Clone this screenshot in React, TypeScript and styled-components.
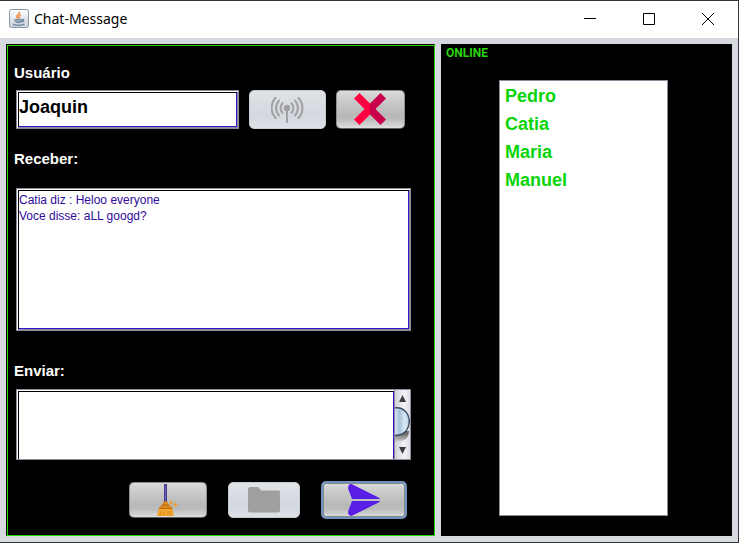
import React, { useState } from 'react';
import styled, { createGlobalStyle } from 'styled-components';

const GREEN = '#2bd40c';
const STEEL = '#8d8b9c';
const VIOLET = '#3a10c8';

const GlobalStyle = createGlobalStyle`
  * { box-sizing: border-box; }
  body { margin: 0; background: #333; font-family: "Liberation Sans", Arial, sans-serif; }
  button, input, textarea { font-family: inherit; }
`;

const Window = styled.div`
  display: flex;
  flex-direction: column;
  min-height: 100vh;
  background: #d6d9df;
  border: solid #36363a;
  border-width: 1px 1px 1px 0;
`;

const TitleBar = styled.header`
  display: flex;
  align-items: center;
  height: 37px;
  padding: 0 1px 2px 9px;
  background: #fff;
`;

const Title = styled.h1`
  flex: 1;
  margin: 0 0 0 5px;
  font: 400 14px/20px "Noto Sans", "Open Sans", sans-serif;
  color: #000;
`;

const WindowControls = styled.div`
  display: flex;
  height: 100%;
`;

const WindowButton = styled.button`
  display: flex;
  align-items: center;
  justify-content: center;
  width: 59px;
  padding: 0;
  border: 0;
  background: transparent;
`;

const Content = styled.main`
  flex: 1;
  display: grid;
  grid-template-columns: 429fr 291fr;
  gap: 6px;
  padding: 6px;
`;

const ChatPanel = styled.section`
  display: flex;
  min-width: 0;
  background: #000;
  border: 1px solid #000;
  border-right-color: ${GREEN};
  border-bottom-color: ${GREEN};
`;

const ChatBody = styled.form`
  flex: 1;
  min-width: 0;
  display: flex;
  flex-direction: column;
  padding: 17px 23px 16px 8px;
  border-left: 1px solid ${GREEN};
  border-top: 1px solid ${GREEN};
`;

const Label = styled.label<{ $above?: number; $below: number }>`
  margin: ${p => p.$above ?? 0}px 0 ${p => p.$below}px -2px;
  font-size: 15px;
  font-weight: 700;
  line-height: 20px;
  color: #fff;
`;

const bevel = `
  border: 1px solid ${STEEL};
  border-radius: 0;
  background: #fff;
  outline: none;
  resize: none;
  box-shadow: inset 1px 1px 0 #fff, inset -1px -1px 0 ${STEEL},
    inset 2px 2px 0 #000, inset -2px -2px 0 ${VIOLET};
`;

const UserRow = styled.div`
  display: flex;
  gap: 10px;
  height: 39px;
  padding-right: 6px;
`;

const NameInput = styled.input`
  ${bevel}
  flex: 1;
  min-width: 0;
  padding: 0 2px 4px 2px;
  font-size: 18px;
  font-weight: 700;
  color: #000;
`;

const MessageLog = styled.textarea`
  ${bevel}
  flex: 1;
  min-height: 143px;
  padding: 3px 2px;
  font-size: 12px;
  line-height: 16px;
  color: #2f0a9c;
`;

const Composer = styled.div`
  display: flex;
  height: 71px;
  border: 1px solid ${STEEL};
  background: #fff;
`;

const ComposerInput = styled.textarea`
  flex: 1;
  min-width: 0;
  margin: 1px 0 0 1px;
  padding: 2px;
  border: solid #000;
  border-width: 1px 1px 0 1px;
  border-right-color: ${VIOLET};
  outline: none;
  resize: none;
  overflow: hidden;
  font-size: 12px;
  line-height: 16px;
  color: #2f0a9c;
`;

const ScrollBar = styled.div`
  display: flex;
  flex-direction: column;
  width: 16px;
  border-left: 1px solid ${STEEL};
  background: linear-gradient(90deg, #d0d2d6, #f2f3f5 60%, #dcdee2);
`;

const ScrollButton = styled.button`
  height: 17px;
  padding: 0;
  border: 0;
  background: transparent;
  line-height: 0;
`;

const ScrollTrack = styled.div`
  flex: 1;
  line-height: 0;
`;

const Actions = styled.div`
  display: flex;
  align-items: center;
  justify-content: flex-end;
  gap: 21px;
  height: 38px;
  margin-top: 21px;
  padding-right: 4px;
`;

const IconButton = styled.button<{ $width: number; $height: number; $focus?: boolean }>`
  display: flex;
  align-items: center;
  justify-content: center;
  flex: none;
  width: ${p => p.$width}px;
  height: ${p => p.$height}px;
  padding: 0;
  border-radius: 5px;
  border: ${p => (p.$focus ? '2px solid #6f93bf' : '1px solid #8e8f91')};
  border-bottom-color: ${p => (p.$focus ? '#6f93bf' : '#5f6062')};
  background: linear-gradient(#dadada, #cbcbcb 25%, #b8b8b8 65%, #bdbdbd 78%, #dedede);
  box-shadow: ${p => (p.$focus ? 'inset 0 0 0 1px #85888d' : 'none')};

  &:disabled {
    border-color: #c6cad1;
    background: linear-gradient(#dfe2e6, #d4d8df 65%, #dce0e7);
  }
`;

const OnlinePanel = styled.aside`
  display: flex;
  flex-direction: column;
  min-width: 0;
  padding: 0 64px 20px 58px;
  background: #000;
`;

const OnlineTitle = styled.h2`
  height: 36px;
  margin: 0 0 0 -53px;
  font: 700 12px/18px Roboto, sans-serif;
  color: ${GREEN};
`;

const UserList = styled.ul`
  flex: 1;
  margin: 0;
  padding: 1px 5px;
  list-style: none;
  background: #fff;
  border: 1px solid ${STEEL};
`;

const User = styled.li`
  font-size: 18px;
  font-weight: 700;
  line-height: 28px;
  color: #08d408;
`;

const JavaIcon = () => (
  <svg width="20" height="20" viewBox="0 0 20 20" aria-hidden="true">
    <defs>
      <linearGradient id="tile" x1="0" y1="0" x2="0" y2="1">
        <stop offset="0" stopColor="#fff" />
        <stop offset="1" stopColor="#c9d0d8" />
      </linearGradient>
    </defs>
    <rect x=".5" y=".5" width="19" height="18" rx="2" fill="url(#tile)" stroke="#8795a5" />
    <path d="M10.5 2.8c1.3 2-3.3 3-2.7 5 .2.8.8 1.3 1.3 2M11.8 6c-2 1-2.3 2-1 3.6" fill="none" stroke="#e98a43" strokeWidth="1.5" />
    <path d="M5.3 10.2h8v1.3c0 2-1 2.5-4 2.5s-4-1-4-3.8z" fill="#6886a1" />
    <path d="M13 10.6c2.5-.7 2.4 1.8-.2 2.2M4 15c2 1.7 9 1.7 11.5 0" fill="none" stroke="#6886a1" strokeWidth="1.3" />
    <path d="M6 12h6" stroke="#c4d0da" strokeWidth=".8" />
  </svg>
);

const AntennaIcon = () => (
  <svg width="33" height="28" viewBox="0 0 33 28" fill="none" stroke="#a0a0a0" strokeWidth="2" strokeLinecap="round" aria-hidden="true">
    <circle cx="16" cy="12" r="3.2" fill="#a0a0a0" stroke="none" />
    <path d="M16 13v13" />
    <path d="M11.5 7.3a6.8 6.8 0 0 0 0 9.4M8 4.6a10.8 10.8 0 0 0 0 14.8M4.5 2a14.7 14.7 0 0 0 0 20" />
    <path d="M20.500 7.3a6.800 6.800 0 0 1 0 9.4M24 4.600a10.800 10.800 0 0 1 0 14.800M27.500 2a14.700 14.700 0 0 1 0 20" />
  </svg>
);

const CrossIcon = () => (
  <svg width="33" height="33" viewBox="0 0 33 33" aria-hidden="true">
    <path d="M5.500 0 16 10.500v11L5.500 32 0 26.500 10.500 16 0 5.500z" fill="#ff0040" />
    <path d="M26.500 0 16 10.500v11L26.500 32l5.500-5.500L21.500 16 32 5.500z" fill="#c8004b" />
  </svg>
);

const BroomIcon = () => (
  <svg width="32" height="32" viewBox="0 0 32 32" aria-hidden="true">
    <path d="M12 0h3v19h-3z" fill="#443d91" />
    <path d="M13 1h1v17h-1z" fill="#6860ae" />
    <path d="m11.500 17.500h4l1 3 3 1.500 1 3H7l1-3 2.500-1.500z" fill="#d98a20" />
    <path d="M6.500 25h14l1.500 7H5z" fill="#f3a72f" />
    <path d="m9 27-1 5m4-5v5m4-5v5m2-5 1 5" stroke="#d98a20" fill="none" />
    <path d="M7 24.500h13.500M10 21h7" stroke="#b86d12" />
    <path d="m19 16 1 1.500 1.700.7-1.700.8-1 1.500-.8-1.500-1.600-.8 1.600-.7zM23.500 18l.9 1.900 1.900.8-1.900.8-.9 1.800-.8-1.800-1.900-.8 1.900-.8z" fill="#efa02c" />
  </svg>
);

const FolderIcon = () => (
  <svg width="32" height="26" viewBox="0 0 32 26" aria-hidden="true">
    <path d="M1.500 0H10l3.500 3.500H31l1 1V24l-1.500 1.500h-29L0 24V1.500z" fill="#a0a0a0" />
  </svg>
);

const SendIcon = () => (
  <svg width="33" height="32" viewBox="0 0 33 32" aria-hidden="true">
    <path d="M4.500.4 31 13.700q.8.500.8 1.300H4L.4 5.500C-.8 2.200 1.500-.9 4.500.4zM4 17h27.800q0 .8-.8 1.300L4.500 31.600C1.500 32.900-.8 29.800.4 26.500z" fill="#5a1fe6" />
  </svg>
);

const Thumb = () => (
  <svg width="15" height="35" viewBox="0 0 15 35" aria-hidden="true">
    <defs>
      <linearGradient id="glass">
        <stop offset="0" stopColor="#e1ecf7" />
        <stop offset=".35" stopColor="#a9c1da" />
        <stop offset=".7" stopColor="#d9e8f5" />
        <stop offset="1" stopColor="#b9cfe3" />
      </linearGradient>
      <linearGradient id="shade" x1="0" y1="0" x2="0" y2="1">
        <stop offset=".2" stopColor="#666" />
        <stop offset="1" stopColor="#ccc" />
      </linearGradient>
    </defs>
    <path d="M0 24h14c0 7-5 10.500-10 10.500H0z" fill="url(#shade)" />
    <path d="M-1 .8h3C9 .8 14.300 7 14.300 14.500S9 28.200 2 28.200h-3z" fill="url(#glass)" stroke="#3c4f66" strokeWidth="1.500" />
  </svg>
);

const Arrow = ({ down }: { down?: boolean }) => (
  <svg width="15" height="17" viewBox="0 0 15 17" aria-hidden="true">
    <path d={down ? 'M4 5h7L7.500 12z' : 'M4 12h7L7.500 5z'} fill="#3b3d40" />
  </svg>
);

const users = ['Pedro', 'Catia', 'Maria', 'Manuel'];

export default function App() {
  const [name, setName] = useState('Joaquin');
  const [draft, setDraft] = useState('');

  return (
    <>
      <GlobalStyle />
      <Window>
        <TitleBar>
          <JavaIcon />
          <Title>Chat-Message</Title>
          <WindowControls>
            <WindowButton aria-label="Minimize">
              <svg width="12" height="12"><path d="M0 5.500h12" stroke="#000" /></svg>
            </WindowButton>
            <WindowButton aria-label="Maximize">
              <svg width="12" height="12"><path d="M.5.5h11v11H.5z" fill="none" stroke="#000" /></svg>
            </WindowButton>
            <WindowButton aria-label="Close">
              <svg width="12" height="12"><path d="m0 0 12 12M12 0 0 12" stroke="#000" /></svg>
            </WindowButton>
          </WindowControls>
        </TitleBar>
        <Content>
          <ChatPanel>
            <ChatBody onSubmit={e => e.preventDefault()}>
              <Label htmlFor="user" $below={7}>Usuário</Label>
              <UserRow>
                <NameInput id="user" value={name} onChange={e => setName(e.target.value)} />
                <IconButton type="button" $width={77} $height={39} disabled aria-label="Conectar"><AntennaIcon /></IconButton>
                <IconButton type="button" $width={69} $height={39} aria-label="Sair"><CrossIcon /></IconButton>
              </UserRow>
              <Label htmlFor="log" $above={20} $below={19}>Receber:</Label>
              <MessageLog id="log" readOnly value={'Catia diz : Heloo everyone\nVoce disse: aLL googd?'} />
              <Label htmlFor="draft" $above={30} $below={8}>Enviar:</Label>
              <Composer>
                <ComposerInput id="draft" value={draft} onChange={e => setDraft(e.target.value)} />
                <ScrollBar>
                  <ScrollButton type="button" aria-label="Rolar para cima"><Arrow /></ScrollButton>
                  <ScrollTrack><Thumb /></ScrollTrack>
                  <ScrollButton type="button" aria-label="Rolar para baixo"><Arrow down /></ScrollButton>
                </ScrollBar>
              </Composer>
              <Actions>
                <IconButton type="button" $width={78} $height={36} aria-label="Limpar"><BroomIcon /></IconButton>
                <IconButton type="button" $width={72} $height={36} disabled aria-label="Arquivo"><FolderIcon /></IconButton>
                <IconButton type="submit" $width={86} $height={38} $focus aria-label="Enviar mensagem"><SendIcon /></IconButton>
              </Actions>
            </ChatBody>
          </ChatPanel>
          <OnlinePanel>
            <OnlineTitle>ONLINE</OnlineTitle>
            <UserList>
              {users.map(u => <User key={u}>{u}</User>)}
            </UserList>
          </OnlinePanel>
        </Content>
      </Window>
    </>
  );
}
